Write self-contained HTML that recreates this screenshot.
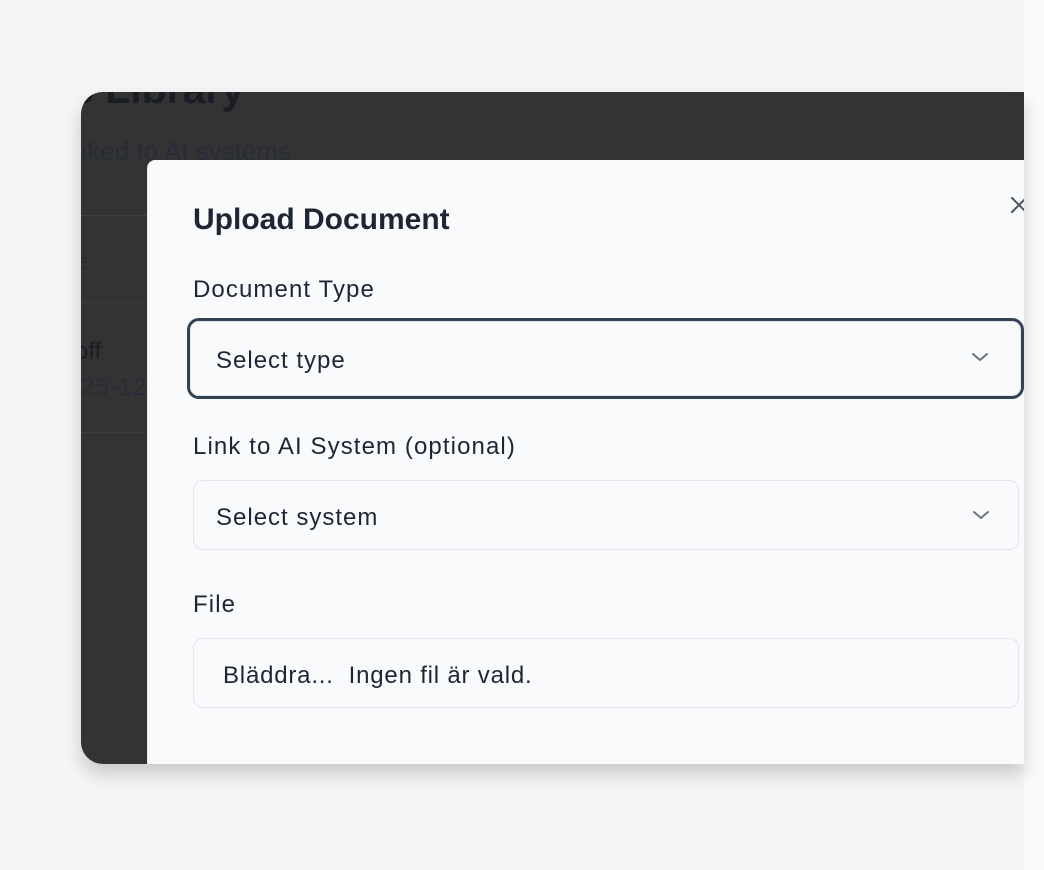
<!DOCTYPE html>
<html><head><meta charset="utf-8"><style>
*{margin:0;padding:0;box-sizing:border-box}
html,body{width:1044px;height:870px;overflow:hidden;background:#f5f5f5;font-family:"Liberation Sans",Arial,sans-serif}
.right{position:absolute;left:1024px;top:0;width:20px;height:870px;background:#fafafa}
.win{position:absolute;left:81px;top:92px;width:943px;height:672px;background:#333;border-radius:22px 0 0 22px;overflow:hidden;box-shadow:0 10px 18px rgba(0,0,0,0.18)}
.bg{position:absolute;color:#1f2430}
.modal{position:absolute;left:66px;top:68px;width:900px;height:620px;background:#f8fafc;border-radius:8px 0 0 0;border-left:1px solid #dfe3ea}
.t{position:absolute;color:#1e2535}
.lb{font-size:24px;letter-spacing:1.1px}
.sel{position:absolute;left:45px;width:826px;height:70px;border:1px solid #e3e6ec;border-radius:10px;background:#f8fafc}
.sel span{position:absolute;left:22px;top:23px;font-size:24px;letter-spacing:1px;color:#1e2535;white-space:nowrap}
.sel svg{position:absolute;right:28px;top:28px}
</style></head><body>
<div class="right"></div>
<div class="win">
 <div class="bg" style="left:-10px;top:-26px;font-size:41px;font-weight:bold;color:#1a1d24">s Library</div>
 <div class="bg" style="left:-14px;top:44px;font-size:26px;color:#272c38">inked to AI systems</div>
 <div style="position:absolute;left:0;top:123px;width:70px;border-top:1px dotted #4a4a4a"></div>
 <div class="bg" style="left:-6px;top:156px;font-size:23px;color:#262b36">e</div>
 <div style="position:absolute;left:0;top:210px;width:70px;border-top:1px dotted #444"></div>
 <div class="bg" style="left:-6px;top:246px;font-size:24px;color:#1a1d24">off</div>
 <div class="bg" style="left:0;top:282px;font-size:24px;letter-spacing:1px;color:#272c38">25-12</div>
 <div style="position:absolute;left:0;top:340px;width:70px;border-top:1px dotted #444"></div>
 <div class="modal">
  <div class="t" style="left:45px;top:43px;font-size:30px;font-weight:bold;letter-spacing:0px">Upload Document</div>
  <svg style="position:absolute;left:862px;top:36px" width="18" height="18" viewBox="0 0 18 18"><path d="M2 2L16 16M16 2L2 16" stroke="#4b5260" stroke-width="2" stroke-linecap="round"/></svg>
  <div class="t lb" style="left:45px;top:116px">Document Type</div>
  <div class="sel" style="top:158px;left:39px;width:837px;height:81px;border:3px solid #334155;border-radius:12px"><div style="position:absolute;inset:0;border:1px solid #e5e7eb;border-radius:9px"></div><span style="left:26px;top:26px">Select type</span><svg style="right:32px;top:30px" width="18" height="12" viewBox="0 0 18 12"><path d="M2 3L9 9L16 3" stroke="#6b7280" stroke-width="2" fill="none" stroke-linecap="round" stroke-linejoin="round"/></svg></div>
  <div class="t lb" style="left:45px;top:273px">Link to AI System (optional)</div>
  <div class="sel" style="top:320px"><span>Select system</span><svg width="18" height="12" viewBox="0 0 18 12"><path d="M2 3L9 9L16 3" stroke="#6b7280" stroke-width="2" fill="none" stroke-linecap="round" stroke-linejoin="round"/></svg></div>
  <div class="t lb" style="left:45px;top:431px">File</div>
  <div class="sel" style="top:478px"><span style="left:29px;letter-spacing:0.8px">Bläddra...&nbsp;&nbsp;Ingen fil är vald.</span></div>
 </div>
</div>
</body></html>
